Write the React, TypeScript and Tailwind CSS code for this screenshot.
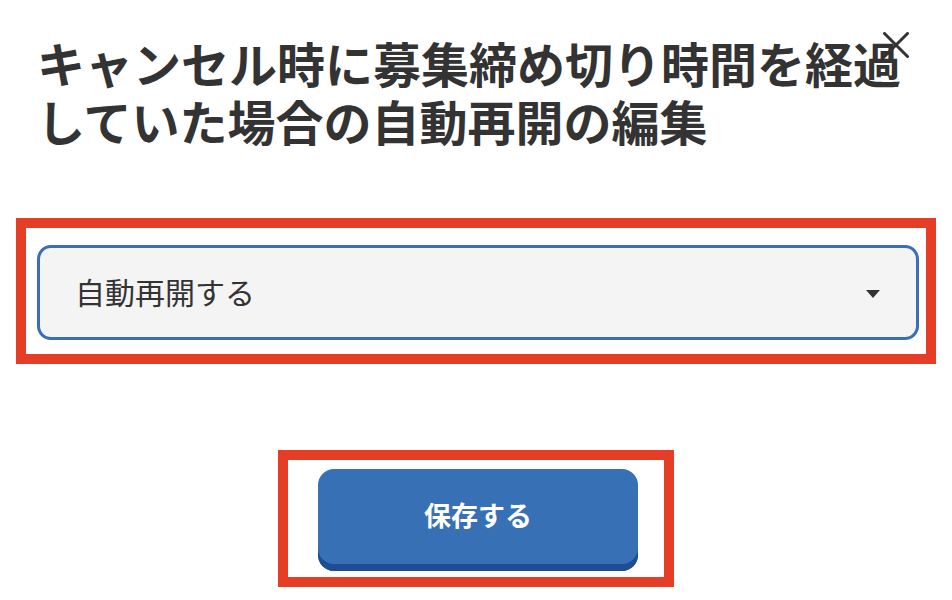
import React from "react";

export default function App() {
  return (
    <div
      className="relative w-[952px] h-[600px] bg-white overflow-hidden"
      style={{ fontFamily: '"Noto Sans CJK JP", "Noto Sans", sans-serif' }}
    >
      <button className="absolute left-[883px] top-[32px] w-[26px] h-[26px] text-[#333]" aria-label="close">
        <svg width="26" height="26" viewBox="0 0 26 26" fill="none">
          <path d="M1.5 1.5 L24.5 24.5 M24.5 1.5 L1.5 24.5" stroke="#333" strokeWidth="3" strokeLinecap="round" />
        </svg>
      </button>

      <div className="flex flex-col">
        <h1 className="pl-[37px] pt-[33px] text-[48px] leading-[58px] font-bold text-[#333] whitespace-nowrap">
          キャンセル時に募集締め切り時間を経過
          <br />
          していた場合の自動再開の編集
        </h1>

        <div className="mx-[16px] mt-[69px] h-[146px] border-[10px] border-[#e63e26] pl-[11px] pr-[7px] pt-[17px] pb-[14px]">
          <div className="h-[95px] border-[3px] border-[#3a6fb5] rounded-[14px] bg-[#f4f4f4] flex items-center justify-between pl-[35px] pr-[36px]">
            <span className="text-[30px] text-[#333] leading-none mb-[4px]">自動再開する</span>
            <svg width="14" height="8" viewBox="0 0 14 8" className="mt-[2px]">
              <path d="M0 0 H14 L7 8 Z" fill="#333" />
            </svg>
          </div>
        </div>

        <div className="self-start ml-[278px] mt-[86px] w-[396px] h-[137px] border-[10px] border-[#e63e26] pl-[30px] pt-[9px]">
          <button className="w-[320px] h-[102px] rounded-[16px] bg-[#3870b5] shadow-[inset_0_-7px_0_#1e4d94] flex items-center justify-center pb-[12px]">
            <span className="text-[27px] font-bold text-white leading-none">保存する</span>
          </button>
        </div>
      </div>
    </div>
  );
}
